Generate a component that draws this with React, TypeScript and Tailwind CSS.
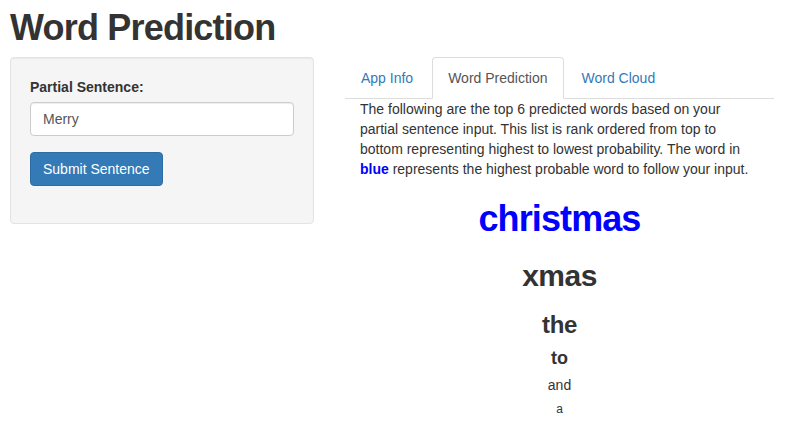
export default function App() {
  const words = [
    { text: 'christmas', cls: 'font-bold text-[36px] leading-[40px] mt-5 mb-2.5 text-[#0000ff] tracking-[-0.9px]' },
    { text: 'xmas', cls: 'font-bold text-[30px] leading-[33px] mt-5 mb-2.5 text-[#333] tracking-[-0.5px]' },
    { text: 'the', cls: 'font-bold text-[24px] leading-[26px] mt-5 mb-2.5 text-[#333] tracking-[-0.3px]' },
    { text: 'to', cls: 'font-bold text-[18px] leading-[20px] mt-2.5 mb-2.5 text-[#333]' },
    { text: 'and', cls: 'text-[14px] leading-[15px] mt-2.5 mb-2.5 text-[#333]' },
    { text: 'a', cls: 'text-[12px] leading-[13px] mt-2.5 mb-2.5 text-[#333]' },
  ]

  return (
    <div className="w-[789px] h-[428px] overflow-hidden bg-white text-[14px] leading-5 text-[#333] font-['Liberation_Sans',Arial,sans-serif]">
      <h1 className="ml-[10px] mt-[8px] text-[36px] leading-[40px] font-bold tracking-[-0.8px] text-[#333]">
        Word Prediction
      </h1>

      <div className="flex mt-[9px]">
        {/* sidebar */}
        <div className="ml-[10px] w-[304px] h-[167px] shrink-0 rounded bg-[#f5f5f5] border border-[#e3e3e3] shadow-[inset_0_1px_1px_rgba(0,0,0,0.05)] p-[19px]">
          <label className="block font-bold mb-[5px]">Partial Sentence:</label>
          <input
            type="text"
            defaultValue="Merry"
            className="block w-full h-[34px] px-3 py-1.5 bg-white border border-[#ccc] rounded text-[#555] shadow-[inset_0_1px_1px_rgba(0,0,0,0.075)] outline-none"
          />
          <button className="mt-4 h-[34px] px-3 rounded bg-[#337ab7] border border-[#2e6da4] text-white">
            Submit Sentence
          </button>
        </div>

        {/* main */}
        <div className="ml-[31px] flex-1 mr-[15px]">
          <ul className="flex border-b border-[#ddd]">
            <li className="-mb-px mr-[3px]">
              <span className="block px-[15px] py-2.5 border border-transparent rounded-t text-[#337ab7]">App Info</span>
            </li>
            <li className="-mb-px mr-[2px]">
              <span className="block px-[15px] py-2.5 border border-[#ddd] border-b-white bg-white rounded-t text-[#555]">Word Prediction</span>
            </li>
            <li className="-mb-px mr-[2px]">
              <span className="block px-[15px] py-2.5 border border-transparent rounded-t text-[#337ab7]">Word Cloud</span>
            </li>
          </ul>

          <div className="pl-[15px]">
            <p className="mb-2.5 w-[400px]">
              The following are the top 6 predicted words based on your partial sentence input. This list is rank ordered from top to bottom representing highest to lowest probability. The word in{' '}
              <span className="font-bold text-[#0000ff]">blue</span> represents the highest probable word to follow your input.
            </p>

            <div className="text-center -ml-[15px]">
              {words.map((w) => (
                <div key={w.text} className={w.cls}>
                  {w.text}
                </div>
              ))}
            </div>
          </div>
        </div>
      </div>
    </div>
  )
}
